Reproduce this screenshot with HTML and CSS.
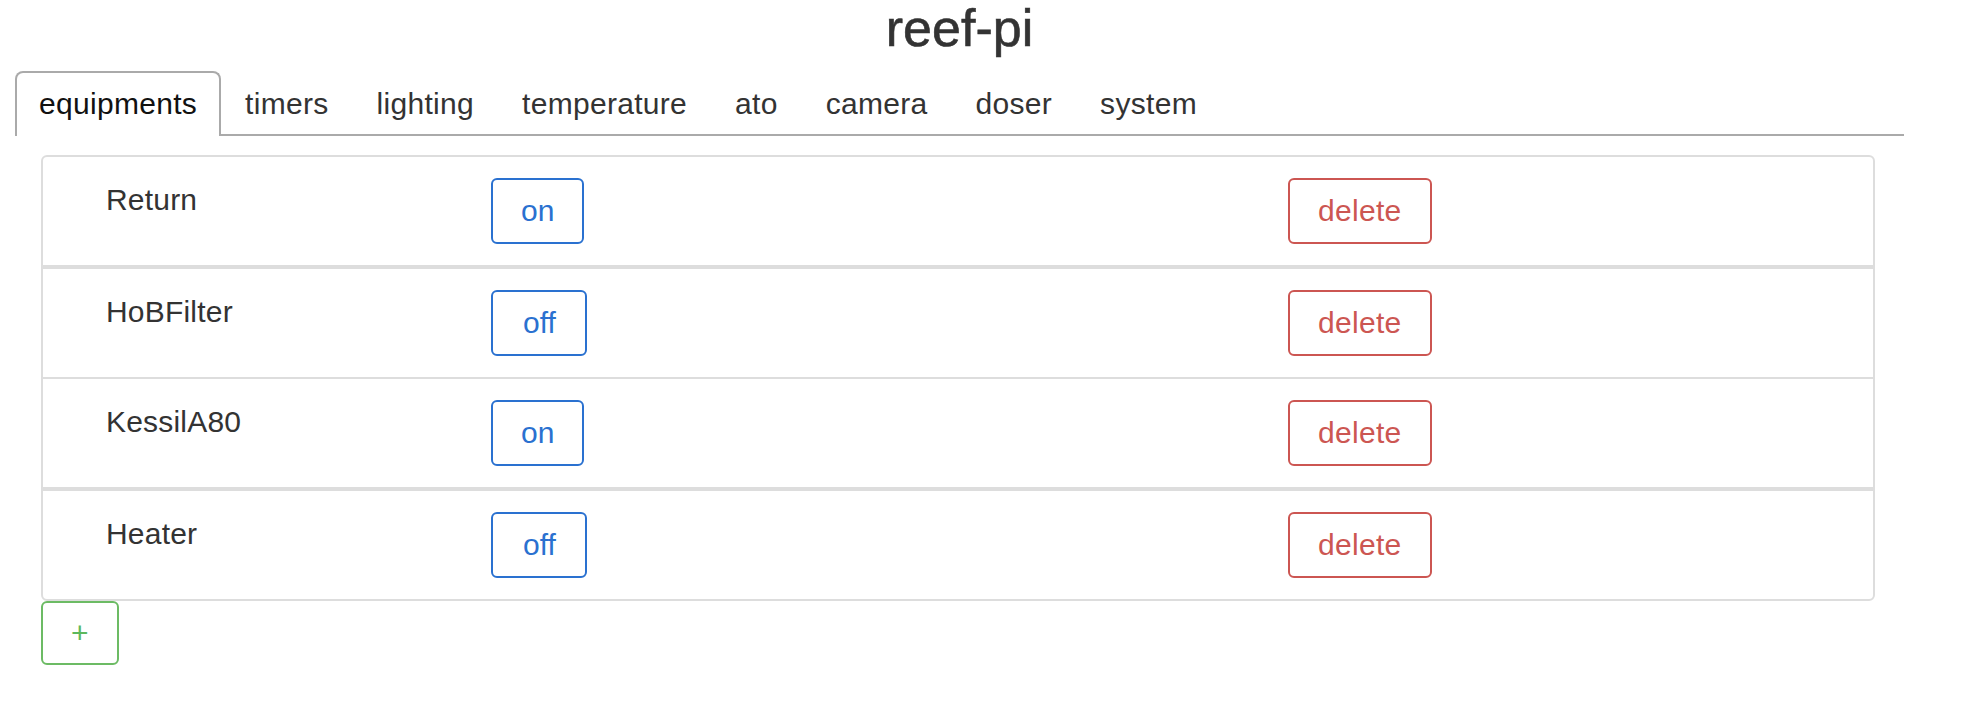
FILE: index.html
```html
<!DOCTYPE html>
<html lang="en">
<head>
<meta charset="utf-8">
<title>reef-pi</title>
<link rel="stylesheet" href="styles.css">
</head>
<body>
<div class="container">
  <h1 class="title">reef-pi</h1>
  <ul class="tabs">
    <li class="tab active">equipments</li>
    <li class="tab">timers</li>
    <li class="tab">lighting</li>
    <li class="tab">temperature</li>
    <li class="tab">ato</li>
    <li class="tab">camera</li>
    <li class="tab">doser</li>
    <li class="tab">system</li>
  </ul>
  <div class="panel">
    <div class="card">
      <div class="row sep-thick">
        <div class="name">Return</div>
        <div class="cell"><button class="btn btn-blue">on</button></div>
        <div class="cell"><button class="btn btn-red">delete</button></div>
      </div>
      <div class="row sep-thin">
        <div class="name">HoBFilter</div>
        <div class="cell"><button class="btn btn-blue btn-off">off</button></div>
        <div class="cell"><button class="btn btn-red">delete</button></div>
      </div>
      <div class="row sep-thick">
        <div class="name">KessilA80</div>
        <div class="cell"><button class="btn btn-blue">on</button></div>
        <div class="cell"><button class="btn btn-red">delete</button></div>
      </div>
      <div class="row">
        <div class="name">Heater</div>
        <div class="cell"><button class="btn btn-blue btn-off">off</button></div>
        <div class="cell"><button class="btn btn-red">delete</button></div>
      </div>
    </div>
    <div class="actions">
      <button class="btn btn-green">+</button>
    </div>
  </div>
</div>
</body>
</html>
```

FILE: styles.css
```css
html, body {
  margin: 0;
  padding: 0;
  background: #ffffff;
}

body {
  font-family: "Liberation Sans", Arial, sans-serif;
  font-size: 30px;
  color: #333333;
}

.container {
  width: 1889px;
  margin-left: 15px;
}

.title {
  margin: 0;
  font-size: 52px;
  line-height: 56px;
  font-weight: normal;
  text-align: center;
  color: #333333;
  -webkit-text-stroke: 0.6px #333333;
}

.tabs {
  list-style: none;
  margin: 15px 0 0 0;
  padding: 0;
  display: flex;
  border-bottom: 2px solid #aaaaaa;
}

.tab {
  padding: 9px 22px 11px 22px;
  line-height: 43px;
  letter-spacing: 0.3px;
  border: 2px solid transparent;
  border-bottom: none;
  margin-bottom: -2px;
  color: #333333;
  border-radius: 8px 8px 0 0;
}

.tab.active {
  border-color: #aaaaaa;
  background: #ffffff;
  color: #111111;
}

.panel {
  margin: 19px 29px 0 26px;
}

.card {
  border: 2px solid #dddddd;
  border-radius: 6px;
}

.row {
  display: grid;
  grid-template-columns: 385px 797px 1fr;
  padding: 21px 0 21px 63px;
}

.row.sep-thick {
  border-bottom: 4px solid #dddddd;
}

.row.sep-thin {
  border-bottom: 2px solid #dddddd;
}

.name {
  line-height: 43px;
  color: #333333;
  letter-spacing: 0.2px;
}

.btn {
  font-family: "Liberation Sans", Arial, sans-serif;
  font-size: 30px;
  line-height: 42px;
  padding: 10px 28px;
  background: #ffffff;
  border: 2px solid;
  border-radius: 6px;
  margin: 0;
}

.btn-blue {
  color: #2a71d0;
  border-color: #2a71d0;
}

.btn-off {
  padding: 10px 29px 10px 30px;
}

.btn-red {
  color: #cc5652;
  border-color: #cc5652;
  padding: 10px 28px;
  letter-spacing: 0.3px;
}

.actions {
  display: flex;
  padding-top: 0;
}

.btn-green {
  color: #5cb85c;
  border-color: #6cbb64;
  line-height: 42px;
  padding: 9px 28px;
}
```
